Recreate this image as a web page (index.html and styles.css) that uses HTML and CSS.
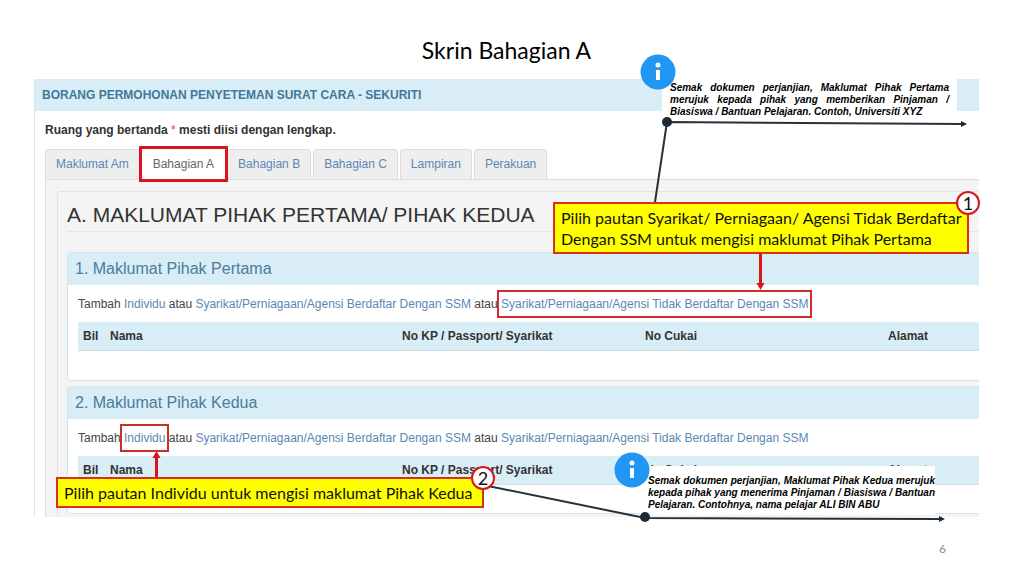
FILE: index.html
```
<!DOCTYPE html>
<html lang="ms">
<head>
    <meta charset="UTF-8">
    <meta name="viewport" content="width=device-width, initial-scale=1.0">
    <title>Skrin Bahagian A</title>
    <link rel="stylesheet" href="styles.css">
</head>
<body>
    <main class="slide">
        <h1 class="slide-title">Skrin Bahagian A</h1>

        <!-- Application form -->
        <section class="form">
            <h2 class="form-header">BORANG PERMOHONAN PENYETEMAN SURAT CARA - SEKURITI</h2>
            <div class="form-body">
                <p class="required">Ruang yang bertanda <span class="star">*</span> mesti diisi dengan lengkap.</p>

                <nav class="tabs">
                    <a href="#">Maklumat Am</a>
                    <a href="#" class="active">Bahagian A</a>
                    <a href="#">Bahagian B</a>
                    <a href="#">Bahagian C</a>
                    <a href="#">Lampiran</a>
                    <a href="#">Perakuan</a>
                </nav>

                <div class="tab-content">
                    <div class="well">
                        <h3 class="section-title">A. MAKLUMAT PIHAK PERTAMA/ PIHAK KEDUA</h3>

                        <section class="panel">
                            <h4 class="panel-header">1. Maklumat Pihak Pertama</h4>
                            <div class="panel-body">
                                <p class="add-links">Tambah <a href="#">Individu</a> atau <a href="#">Syarikat/Perniagaan/Agensi Berdaftar Dengan SSM</a> atau <a href="#" class="marked">Syarikat/Perniagaan/Agensi Tidak Berdaftar Dengan SSM</a></p>
                                <table>
                                    <thead>
                                        <tr>
                                            <th class="col-bil">Bil</th>
                                            <th class="col-nama">Nama</th>
                                            <th class="col-no">No KP / Passport/ Syarikat</th>
                                            <th class="col-no">No Cukai</th>
                                            <th>Alamat</th>
                                        </tr>
                                    </thead>
                                    <tbody>
                                        <tr><td colspan="5"></td></tr>
                                    </tbody>
                                </table>
                            </div>
                        </section>

                        <section class="panel">
                            <h4 class="panel-header">2. Maklumat Pihak Kedua</h4>
                            <div class="panel-body">
                                <p class="add-links">Tambah <a href="#" class="marked">Individu</a> atau <a href="#">Syarikat/Perniagaan/Agensi Berdaftar Dengan SSM</a> atau <a href="#">Syarikat/Perniagaan/Agensi Tidak Berdaftar Dengan SSM</a></p>
                                <table>
                                    <thead>
                                        <tr>
                                            <th class="col-bil">Bil</th>
                                            <th class="col-nama">Nama</th>
                                            <th class="col-no">No KP / Passport/ Syarikat</th>
                                            <th class="col-no">No Cukai</th>
                                            <th>Alamat</th>
                                        </tr>
                                    </thead>
                                    <tbody>
                                        <tr><td colspan="5"></td></tr>
                                    </tbody>
                                </table>
                            </div>
                        </section>
                    </div>
                </div>
            </div>
        </section>

        <footer class="page-number">6</footer>

        <!-- Notes and callouts over the form -->
        <p class="note note-first">Semak dokumen perjanjian, Maklumat Pihak Pertama merujuk kepada pihak yang memberikan Pinjaman / Biasiswa / Bantuan Pelajaran. Contoh, Universiti XYZ</p>
        <p class="note note-second">Semak dokumen perjanjian, Maklumat Pihak Kedua merujuk kepada pihak yang menerima Pinjaman / Biasiswa / Bantuan Pelajaran. Contohnya, nama pelajar ALI BIN ABU</p>

        <svg class="arrows" width="1024" height="576" viewBox="0 0 1024 576" aria-hidden="true">
            <g fill="none" stroke="#28303a" stroke-width="2">
                <path d="M655 202 L667 122 L963 124"/>
                <path d="M488 486 L645 518 L941 519"/>
            </g>
            <g fill="#1f2933">
                <circle cx="667" cy="122" r="5"/>
                <circle cx="645" cy="517" r="5"/>
                <path d="M961 121 L967 124 L961 127 Z"/>
                <path d="M939 516 L945 519 L939 522 Z"/>
            </g>
            <g stroke="#d9141a" stroke-width="3">
                <path d="M760.500 252 V285"/>
                <path d="M156.500 478 V456"/>
            </g>
            <g fill="#d9141a">
                <path d="M756.500 283 H764.500 L760.500 290 Z"/>
                <path d="M152.500 458 H160.500 L156.500 451 Z"/>
            </g>
            <g fill="#2196f3">
                <circle cx="658" cy="72" r="17.500"/>
                <circle cx="632" cy="470" r="17.500"/>
            </g>
            <g fill="#fff">
                <circle cx="658" cy="65" r="2.500"/>
                <rect x="656" y="70" width="4" height="10"/>
                <circle cx="632" cy="463" r="2.500"/>
                <rect x="630" y="468" width="4" height="10"/>
            </g>
        </svg>

        <div class="callout callout-first">
            Pilih pautan Syarikat/ Perniagaan/ Agensi Tidak Berdaftar<br>
            Dengan SSM untuk mengisi maklumat Pihak Pertama
            <span class="badge">1</span>
        </div>
        <div class="callout callout-second">
            Pilih pautan Individu untuk mengisi maklumat Pihak Kedua
            <span class="badge">2</span>
        </div>
    </main>
</body>
</html>
```
FILE: styles.css
```
* {
    box-sizing: border-box;
}

body {
    margin: 0;
    background-color: #fff;
    font-family: "Liberation Sans", Arial, sans-serif;
    font-size: 12px;
    line-height: 16px;
    color: #444;
}

h1, h2, h3, h4, p {
    margin: 0;
}

a {
    color: #5a87b5;
    text-decoration: none;
}

.slide {
    position: relative;
    padding: 34px 45px 16px 34px;
}

.slide-title {
    padding-bottom: 13px;
    font-family: Lato, sans-serif;
    font-size: 23px;
    font-weight: 400;
    line-height: 32px;
    text-align: center;
    color: #000;
}

/* Form */
.form {
    border-left: 1px solid #cfe9f1;
}

.form-header {
    padding: 8px 7px;
    background-color: #d9edf7;
    font-size: 12px;
    line-height: 16px;
    color: #41799a;
}

.form-body {
    padding: 11px 0 0 10px;
}

.required {
    font-weight: bold;
    color: #333;
}

.star {
    font-weight: 400;
    color: #e33;
}

.tabs {
    display: flex;
    gap: 2px;
    padding-top: 11px;
}

.tabs a {
    padding: 6px 10px 7px;
    border: 1px solid #ddd;
    border-bottom: none;
    border-radius: 4px 4px 0 0;
    background-color: #eee;
}

.tabs .active {
    position: relative;
    border-color: #fff;
    border-radius: 0;
    background-color: #fff;
    outline: 3px solid #d9141a;
    color: #666;
}

.tab-content {
    padding: 11px 0 0 11px;
    border-top: 1px solid #ddd;
    border-left: 1px solid #ddd;
    background-color: #f4f4f4;
}

.well {
    padding: 10px 0 3px 9px;
    border-top: 1px solid #e3e3e3;
    border-left: 1px solid #e3e3e3;
    border-top-left-radius: 3px;
}

.section-title {
    margin-bottom: 20px;
    padding-bottom: 3px;
    border-bottom: 1px solid #e5e5e5;
    font-size: 21px;
    font-weight: 400;
    line-height: 26px;
    color: #333;
}

/* Panels */
.panel {
    border: 1px solid #cfe6ee;
    border-right: none;
    border-radius: 4px 0 0 4px;
    background-color: #fff;
}

.panel + .panel {
    margin-top: 5px;
}

.panel-header {
    padding: 6px 7px;
    background-color: #d9edf7;
    font-size: 16px;
    font-weight: 400;
    line-height: 20px;
    color: #4a7d9b;
}

.panel-body {
    padding: 11px 0 0 10px;
}

.add-links {
    padding-bottom: 10px;
    white-space: nowrap;
}

.marked {
    margin: 0 -4px;
    padding: 5px 2px;
    border: 2px solid #c9302c;
}

table {
    width: 100%;
    border-collapse: collapse;
    table-layout: fixed;
}

th {
    padding: 6px 5px;
    border-bottom: 1px solid #cfdfe6;
    background-color: #d9edf7;
    text-align: left;
    white-space: nowrap;
    color: #333;
}

td {
    height: 29px;
    padding: 0;
}

.col-bil {
    width: 27px;
}

.col-nama {
    width: 292px;
}

.col-no {
    width: 243px;
}

.page-number {
    padding: 22px 33px 0 0;
    font-family: Lato, sans-serif;
    line-height: 20px;
    text-align: right;
    color: #8b8b8b;
}

/* Annotations */
.arrows {
    position: absolute;
    top: 0;
    left: 0;
}

.note {
    position: absolute;
    width: 295px;
    padding: 4px 8px;
    background-color: #fff;
    font-size: 10px;
    font-style: italic;
    font-weight: bold;
    line-height: 12px;
    text-align: justify;
    color: #000;
}

.note-first {
    top: 78px;
    left: 662px;
}

.note-second {
    top: 466px;
    left: 640px;
    padding: 9px 0 4px 8px;
}

.callout {
    position: absolute;
    padding: 3px 6px;
    border: 2px solid #d9301a;
    background-color: #ff0;
    font-family: Lato, sans-serif;
    font-size: 16px;
    line-height: 21px;
    white-space: nowrap;
    color: #111;
}

.callout-first {
    top: 202px;
    left: 553px;
    width: 416px;
}

.callout-second {
    top: 477px;
    left: 56px;
    width: 428px;
}

.badge {
    position: absolute;
    top: -13px;
    right: -13px;
    width: 24px;
    height: 24px;
    border: 2px solid #d9141a;
    border-radius: 50%;
    background-color: #fff;
    font-size: 18px;
    line-height: 20px;
    text-align: center;
}
```
